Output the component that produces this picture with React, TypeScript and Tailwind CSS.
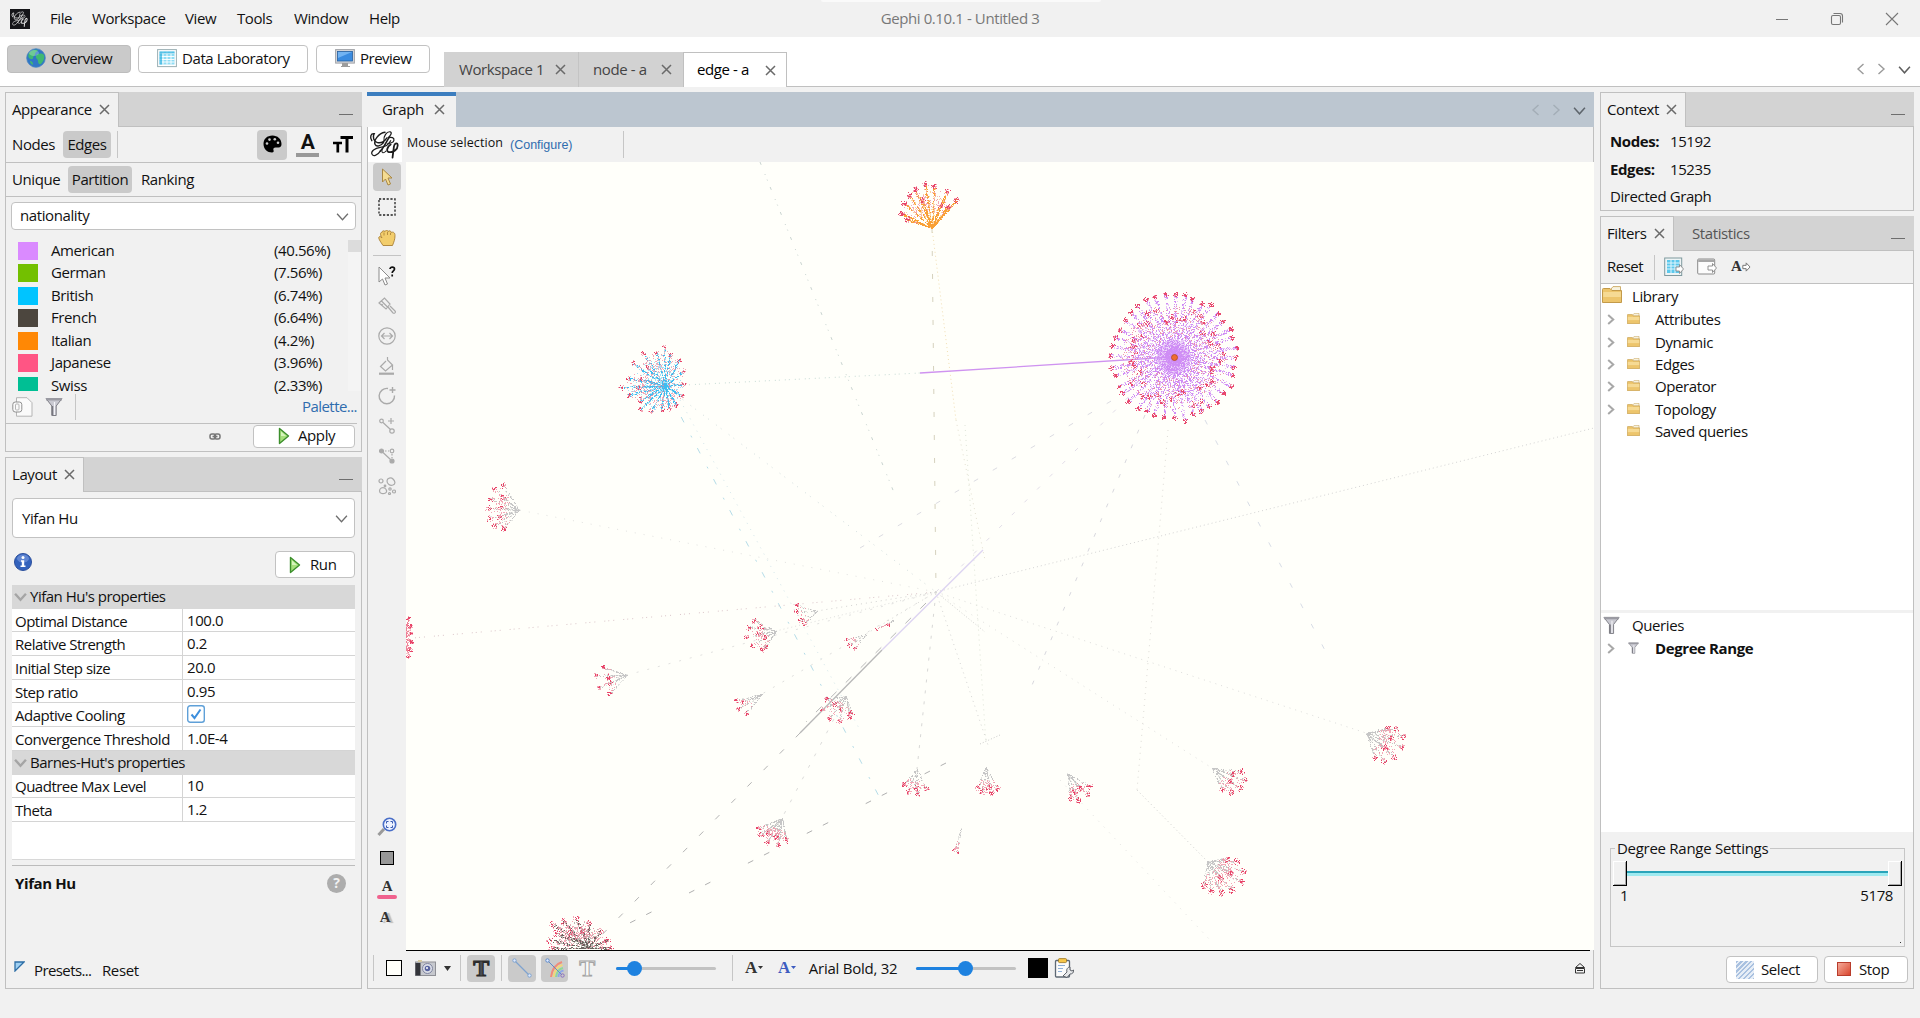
import React from "react";

type Pt = [number, number];
type Kids = { children?: React.ReactNode };

/* ---------- small shared pieces ---------- */

const Close = ({ className = "" }: { className?: string }) => (
  <svg className={"shrink-0 " + className} width="11" height="11" viewBox="0 0 11 11" fill="none" stroke="#6a6a6a" strokeWidth="1.5">
    <path d="M1 1l9 9M10 1l-9 9" />
  </svg>
);

const Chevron = ({ dir, color = "#6e6e6e", w = 12, sw = 1.4 }: { dir: "l" | "r" | "d"; color?: string; w?: number; sw?: number }) => (
  <svg className="shrink-0" width={w} height={w} viewBox="0 0 12 12" fill="none" stroke={color} strokeWidth={sw}>
    <path d={dir === "l" ? "M8.5 1L3 6l5.5 5" : dir === "r" ? "M3.5 1L9 6l-5.5 5" : "M1 3.5L6 9l5-5.5"} />
  </svg>
);

const Minimize = ({ className = "" }: { className?: string }) => <div className={"h-px w-[14px] bg-[#6e6e6e] " + className} />;
const VSep = ({ className = "" }: { className?: string }) => <div className={"w-px shrink-0 bg-[#c6c6c6] " + className} />;

const GephiMark = ({ color }: { color: string }) => (
  <svg width="100%" height="100%" viewBox="0 0 34 34" fill="none" stroke={color} strokeLinecap="round">
    <path strokeWidth="1.500" d="M3 13C.5 9 2 5 5.500 5.500 3.500 9 5 14 9 15c5 1 8-2 10-5M17 4C10 5 4.500 13 6.500 17c1.500 3 6 1.500 9-2" />
    <path strokeWidth="1.300" d="M16 13c-1-5 3-10 6.500-9.500C25 4 23 8 20 10c4-1.500 7 0 6.500 2.500S22 16 20 16" />
    <path strokeWidth="1.700" d="M21 10c-3 5-5 10-9 14" />
    <path strokeWidth="1.300" d="M12 24c-3 5-8 6-9 3s3-6 9-7 8-2 11-7" />
    <path strokeWidth="1.100" d="M14 22c-1 4 1 5 4 2" />
    <path strokeWidth="1.900" d="M23 17c-3 2-5.500 7-2 8 5 1 9.500-3 9.500-7 0-3.500-3.500-2.500-4 1l-1.500 12" />
  </svg>
);

const Play = () => (
  <svg width="12" height="18" viewBox="0 0 12 18">
    <path d="M1.500 1.500v15L10.500 9z" fill="#a6e07c" stroke="#3c8f2c" strokeWidth="1.400" strokeLinejoin="round" />
    <path d="M3 4.500V9h5z" fill="#d6f5bd" />
  </svg>
);

const Funnel = ({ s = 18 }: { s?: number }) => (
  <svg width={s} height={(s * 20) / 18} viewBox="0 0 18 20">
    <path d="M1 1.500h16L11.200 9v9.500h-4.400V9z" fill="#c9c9d1" stroke="#7d7d85" strokeWidth="1" />
    <path d="M1 1h16v2.500H1z" fill="#9a9aa2" />
    <path d="M7.500 9v9" stroke="#77777f" strokeWidth="1.500" />
    <path d="M9.500 5v13" stroke="#f4f4f8" strokeWidth="1.200" />
  </svg>
);

const Folder = ({ w = 12, h = 11 }: { w?: number; h?: number }) => (
  <svg width={w} height={h} viewBox="0 0 20 17" preserveAspectRatio="none">
    <path d="M9 3l2-2.400h7.500V5H9z" fill="#f7f2df" stroke="#c39c4c" strokeWidth=".8" />
    <path d="M.5 3.500c0-1 .5-1 1-1h6.500l2 2h9.500v12H.5z" fill="#edc56c" stroke="#c39a4a" strokeWidth="1" />
    <path d="M1.200 6h17.600v5H1.200z" fill="#f6da94" />
  </svg>
);

function PanelTab({ title, width, children }: { title: string; width: string } & Kids) {
  return (
    <div className="flex h-[35px] shrink-0 bg-[#d3d3d3]">
      <div className={"flex items-center border-t border-l border-r border-[#c0c0c0] bg-[#f1f1f1] pl-[6px] " + width}>
        <span>{title}</span>
        <Close className="mr-[8px] mb-[2px] ml-auto" />
      </div>
      <div className="flex flex-1 border-b border-[#c0c0c0]">
        {children}
        <Minimize className="mt-[22px] mr-[9px] ml-auto" />
      </div>
    </div>
  );
}

const Button = ({ className = "", children }: { className?: string } & Kids) => (
  <div className={"flex shrink-0 items-center rounded-[4px] border border-[#c2c2c2] bg-white " + className}>{children}</div>
);

/* ---------- top bars ---------- */

function MenuBar() {
  return (
    <div className="relative flex h-[37px] items-center bg-[#f1f1f1] pl-[10px]">
      <div className="h-[20px] w-[20px] bg-[#151518] p-px">
        <GephiMark color="#dcdcdc" />
      </div>
      <div className="ml-[20px] flex h-full items-center">
        <span className="w-[42px]">File</span>
        <span className="w-[93px]">Workspace</span>
        <span className="w-[52px]">View</span>
        <span className="w-[57px]">Tools</span>
        <span className="w-[75px]">Window</span>
        <span>Help</span>
      </div>
      <div className="absolute top-0 left-[821px] h-[2px] w-[280px] rounded-b bg-[#fafafa]" />
      <div className="absolute inset-x-0 flex justify-center text-[#787878]">
        <span>Gephi 0.10.1 - Untitled 3</span>
      </div>
      <svg className="mr-[20px] mb-[2px] ml-auto" width="126" height="16" viewBox="0 0 126 16" fill="none" stroke="#777" strokeWidth="1.100">
        <path d="M2 9.500h12M112 3l12 12M124 3l-12 12" />
        <rect x="57.500" y="5.500" width="9" height="9" rx="1.500" />
        <path d="M59.500 3.500h6.500a2.500 2.500 0 0 1 2.500 2.500v6.500" />
      </svg>
    </div>
  );
}

function Toolbar() {
  return (
    <div className="flex h-[50px] border-b border-[#c0c0c0] bg-white pl-[7px]">
      <div className="mt-[8px] flex h-[28px] w-[124px] items-center rounded-[4px] border border-[#bdbdbd] bg-[#cacaca] pl-[18px]">
        <svg className="mb-[2px]" width="20" height="20" viewBox="0 0 20 20">
          <circle cx="10" cy="10" r="9.300" fill="#2f76c6" stroke="#4a86c0" strokeWidth=".8" />
          <path d="M3 5c2-3 6-4 9-3-1 2-3 2-3 4s-2 2-2 4-3 1-4 0-1-3 0-5zM10 8c2-3 6-3 8-1 1 4-1 7-3 9-2 1-3-1-3-3s-3-3-2-5zM4 13c2 0 3 1 3 4-2-1-3-2-3-4z" fill="#3fb872" />
          <ellipse cx="8" cy="5" rx="5" ry="3" fill="#fff" opacity=".25" />
        </svg>
        <span className="ml-[5px] tracking-[-0.5px]">Overview</span>
      </div>
      <Button className="mt-[8px] ml-[7px] h-[28px] w-[170px] pl-[18px]">
        <svg className="mb-[2px]" width="20" height="20" viewBox="0 0 20 20">
          <rect x=".6" y="1.600" width="18.800" height="17" fill="#fff" stroke="#9bb0b4" />
          <rect x="2.500" y="3.500" width="15" height="13" fill="#8fdcf4" />
          <path d="M2.500 5.500h15M2.500 8.500h15M2.500 11.500h15M2.500 14h15M6 3.500v13M10 3.500v13M14 3.500v13" stroke="#fff" strokeWidth=".9" />
          <path d="M2.500 3.500h15v2h-15zM2.500 3.500h2.500v13H2.500z" fill="#35b4e0" opacity=".7" />
        </svg>
        <span className="ml-[5px]">Data Laboratory</span>
      </Button>
      <Button className="mt-[8px] ml-[8px] h-[28px] w-[114px] pl-[18px]">
        <svg className="mb-[2px]" width="20" height="20" viewBox="0 0 20 20">
          <rect x=".6" y="1.600" width="18.800" height="13.500" fill="#d7d9dc" stroke="#a2a4a8" />
          <rect x="2.500" y="3.500" width="15" height="9.500" fill="#3a8be0" stroke="#27609f" strokeWidth=".8" />
          <path d="M3 4h14l-14 6z" fill="#72b3f2" />
          <path d="M7 15h6v3H7zM6 18h9v1H6z" fill="#9c9c9c" />
        </svg>
        <span className="ml-[5px] tracking-[-0.5px]">Preview</span>
      </Button>
      <div className="mt-[15px] ml-[14px] flex h-[35px] text-[#444]">
        <div className="flex w-[134px] items-center bg-[#d2d2d2] pl-[15px]">
          <span>Workspace 1</span>
          <Close className="mr-[12px] ml-auto" />
        </div>
        <div className="flex w-[105px] items-center border-l border-[#c4c4c4] bg-[#d2d2d2] pl-[14px]">
          <span>node - a</span>
          <Close className="mr-[11px] ml-auto" />
        </div>
        <div className="flex w-[104px] items-center border border-b-0 border-[#c0c0c0] bg-white pl-[13px] text-black">
          <span>edge - a</span>
          <Close className="mr-[10px] ml-auto" />
        </div>
      </div>
      <div className="mt-[26px] mr-[9px] ml-auto flex gap-[8px]">
        <Chevron dir="l" color="#9a9a9a" />
        <Chevron dir="r" color="#9a9a9a" />
        <div className="ml-[3px]"><Chevron dir="d" color="#5e5e5e" w={13} /></div>
      </div>
    </div>
  );
}

/* ---------- left column ---------- */

const nationalities: [string, string, string][] = [
  ["American", "(40.56%)", "#da8aff"],
  ["German", "(7.56%)", "#73c000"],
  ["British", "(6.74%)", "#00c4ff"],
  ["French", "(6.64%)", "#4c463e"],
  ["Italian", "(4.2%)", "#ff8805"],
  ["Japanese", "(3.96%)", "#ff5584"],
  ["Swiss", "(2.33%)", "#00bf94"],
];

function Appearance() {
  return (
    <div className="flex h-[360px] flex-col border-b border-[#c0c0c0]">
      <PanelTab title="Appearance" width="w-[114px]" />
      <div className="flex flex-1 flex-col border-x border-[#c0c0c0]">
        <div className="flex h-[36px] items-center border-b border-[#c0c0c0] pl-[6px]">
          <span className="w-[51px]">Nodes</span>
          <div className="flex h-[27px] w-[48px] items-center justify-center rounded-[4px] bg-[#cacaca]"><span>Edges</span></div>
          <VSep className="ml-[6px] h-[27px]" />
          <div className="ml-auto flex h-[30px] w-[30px] items-center justify-center rounded-[4px] bg-[#cacaca]">
            <svg className="mb-[2px]" width="19" height="18" viewBox="0 0 19 18">
              <path d="M9.500.5C4 .5.5 4 .5 9s4 8.500 8.500 8.500c1.700 0 2-1 1.500-2.200-.6-1.600.3-2.800 2-2.800h3c2 0 3-1.500 3-3.500 0-5-4-8.500-9-8.500z" fill="#000" />
              <circle cx="4" cy="8.500" r="1.300" fill="#ccc" /><circle cx="6.500" cy="4.600" r="1.300" fill="#ccc" />
              <circle cx="11.800" cy="4.300" r="1.300" fill="#ccc" /><circle cx="15" cy="7.800" r="1.300" fill="#ccc" />
            </svg>
          </div>
          <div className="mb-[2px] ml-[9px] flex h-[26px] w-[23px] flex-col items-center">
            <span className="mb-0! h-[22px] font-['Roboto'] text-[21px] leading-[22px] font-bold">A</span>
            <div className="h-[4px] w-full bg-[#999]" />
          </div>
          <svg className="mr-[8px] mb-[1px] ml-[14px]" width="20" height="18" viewBox="0 0 20 18" fill="none" stroke="#000">
            <path d="M7.500 2.500H20M14 2v15.500" strokeWidth="3" />
            <path d="M0 8h9M4.800 8v9.500" strokeWidth="2.700" />
          </svg>
        </div>
        <div className="flex h-[34px] items-center border-b border-[#c0c0c0] pl-[6px]">
          <span className="w-[56px]">Unique</span>
          <div className="mr-[9px] flex h-[27px] w-[64px] items-center justify-center rounded-[4px] bg-[#cacaca]"><span>Partition</span></div>
          <span>Ranking</span>
        </div>
        <Button className="mx-[5px] mt-[5px] h-[28px] justify-between pr-[6px] pl-[8px]">
          <span>nationality</span>
          <Chevron dir="d" w={13} sw={1.2} />
        </Button>
        <div className="mt-[9px] flex h-[152px]">
          <div className="flex-1 pl-[12px]">
            {nationalities.map(([n, p, c], i) => (
              <div key={n} className="flex h-[22.500px] items-center">
                <div className={"w-[20px] " + (i === 6 ? "mt-px mb-[4px] h-[14px]" : "mt-px h-[18px]")} style={{ background: c }} />
                <span className="mb-[1px]! ml-[13px] w-[223px]">{n}</span>
                <span className="mb-[1px]!">{p}</span>
              </div>
            ))}
          </div>
          <div className="mt-px w-[13px] bg-[#f4f4f4]"><div className="h-[12px] bg-[#dcdcdc]" /></div>
        </div>
        <div className="mr-[4px] flex h-[33px] items-center border-b border-[#c0c0c0] pl-[6px]">
          <svg width="21" height="20" viewBox="0 0 21 20" fill="#fafafa" stroke="#b5b5b5">
            <path d="M4.500.7h10.500l5 5v13.500H4.500z" />
            <rect x=".8" y="5" width="9" height="10" rx="2.500" stroke="#8f8f8f" />
            <rect x="3.500" y="7" width="3.500" height="6" rx="1" />
          </svg>
          <div className="ml-[12px]"><Funnel s={18} /></div>
          <VSep className="ml-[12px] h-[26px]" />
          <span className="ml-auto tracking-[-0.55px] text-[#2f6cae]">Palette...</span>
        </div>
        <div className="flex flex-1 items-start">
          <svg className="mt-[9px] ml-[203px]" width="12" height="7" viewBox="0 0 12 7" fill="none" stroke="#777" strokeWidth="1.500">
            <rect x="1" y="1" width="5.500" height="5" rx="2" /><rect x="5.500" y="1" width="5.500" height="5" rx="2" /><path d="M3.500 3.500h5" />
          </svg>
          <Button className="mt-px ml-[32px] h-[23px] w-[102px] pl-[24px]">
            <div className="mb-[2px]"><Play /></div>
            <span className="mb-[3px]! ml-[8px]">Apply</span>
          </Button>
        </div>
      </div>
    </div>
  );
}

const PropHead = ({ children }: Kids) => (
  <div className="flex h-[23.700px] items-center bg-[#d8d8d8] pl-[2px]">
    <Chevron dir="d" color="#a5a5a5" w={13} sw={2.2} />
    <span className="mb-[1px]! ml-[3px] tracking-[-0.5px]">{children}</span>
  </div>
);

const Prop = ({ k, children }: { k: string } & Kids) => (
  <div className="flex h-[23.700px] items-stretch border-b border-[#d4d4d4]">
    <div className="flex w-[171px] items-center border-r border-[#d4d4d4] pt-px pl-[3px] tracking-[-0.5px] whitespace-nowrap">{k}</div>
    <div className="flex items-center pb-[1px] pl-[4px]">{children}</div>
  </div>
);

function LayoutPanel() {
  return (
    <div className="mt-[5px] flex h-[532px] flex-col border-b border-[#c0c0c0]">
      <PanelTab title="Layout" width="w-[79px]" />
      <div className="flex flex-1 flex-col border-x border-[#c0c0c0] px-[6px]">
        <Button className="mt-[6px] h-[40px] justify-between pr-[6px] pl-[9px]">
          <span className="mb-[1px]!">Yifan Hu</span>
          <Chevron dir="d" w={13} sw={1.2} />
        </Button>
        <div className="mt-[13px] flex justify-between">
          <svg className="mt-[2px] ml-[2px]" width="18" height="18" viewBox="0 0 18 18">
            <circle cx="9" cy="9" r="8.500" fill="#3463bd" stroke="#2b4f9c" />
            <ellipse cx="9" cy="5.500" rx="6" ry="4" fill="#7f9fe0" opacity=".6" />
            <path d="M7 7.200h3.200v5.300h1.300v1.600H6.500v-1.600h1.300V8.800H7z" fill="#fff" /><circle cx="9" cy="4.500" r="1.500" fill="#fff" />
          </svg>
          <Button className="h-[27px] w-[80px] pl-[13px]">
            <Play />
            <span className="ml-[9px]">Run</span>
          </Button>
        </div>
        <div className="mt-[7px] h-[275px] border-b border-[#d8d8d8] bg-white">
          <PropHead>Yifan Hu's properties</PropHead>
          <Prop k="Optimal Distance">100.0</Prop>
          <Prop k="Relative Strength">0.2</Prop>
          <Prop k="Initial Step size">20.0</Prop>
          <Prop k="Step ratio">0.95</Prop>
          <Prop k="Adaptive Cooling">
            <svg width="18" height="18" viewBox="0 0 18 18" fill="none">
              <rect x=".7" y=".7" width="16.600" height="16.600" rx="2.500" fill="#fff" stroke="#5fa0d8" strokeWidth="1.400" />
              <path d="M4.500 9.500l3 3.500 6-8.500" stroke="#3d8fdd" strokeWidth="2" />
            </svg>
          </Prop>
          <Prop k="Convergence Threshold">1.0E-4</Prop>
          <PropHead>Barnes-Hut's properties</PropHead>
          <Prop k="Quadtree Max Level">10</Prop>
          <Prop k="Theta">1.2</Prop>
        </div>
        <div className="mt-[5px] h-px bg-[#bcbcbc]" />
        <div className="mt-[7px] flex items-center justify-between pr-[9px] pl-[3px]">
          <b className="font-bold">Yifan Hu</b>
          <div className="flex h-[19px] w-[19px] items-center justify-center rounded-full bg-[#adadad] text-[14px] font-bold text-[#f2f2f2]">?</div>
        </div>
        <div className="mt-auto mb-[6px] flex items-center pl-[2px]">
          <svg className="mb-[10px]" width="11" height="11" viewBox="0 0 11 11"><path d="M1 1h9L1 10z" fill="#9fd0f3" stroke="#2d6ea6" strokeWidth="1.300" /></svg>
          <span className="ml-[9px] w-[68px] tracking-[-0.6px]">Presets...</span>
          <span>Reset</span>
        </div>
      </div>
    </div>
  );
}

/* ---------- network drawing ---------- */

function makeRandom(seed: number) {
  let a = seed >>> 0;
  return () => {
    a = (a + 0x6d2b79f5) >>> 0;
    let t = a;
    t = Math.imul(t ^ (t >>> 15), t | 1);
    t ^= t + Math.imul(t ^ (t >>> 7), t | 61);
    return ((t ^ (t >>> 14)) >>> 0) / 4294967296;
  };
}

type Cluster = { hub: Pt; tips: Pt[]; color: string; leaf?: number; spoke?: number; spread?: number; haze?: number; hazeLeaf?: number };

const GREY = "#c6c6c6";

const clusters: Cluster[] = [
  { hub: [932, 228], tips: [[901, 213], [904, 203], [909, 195], [915, 189], [925, 184], [934, 186], [947, 191], [956, 200], [948, 206], [907, 219], [922, 200], [940, 205]], color: "#f9a035", leaf: 30, spoke: 100, spread: 3, haze: 140, hazeLeaf: 140 },
  { hub: [665, 386], tips: [[633, 363], [643, 353], [656, 352], [670, 354], [627, 378], [621, 387], [629, 395], [640, 409], [651, 411], [661, 410], [669, 408], [640, 378], [647, 367], [640, 400], [638, 387], [664, 347], [679, 360], [683, 371], [684, 384], [682, 396], [676, 405]], color: "#3fbcf0", leaf: 13, spoke: 60, spread: 2.7, haze: 620, hazeLeaf: 420 },
  { hub: [519, 510], tips: [[503, 485], [494, 489], [490, 498], [488, 508], [489, 518], [494, 526], [503, 528], [502, 497], [500, 507], [499, 517]], color: GREY, leaf: 18, spoke: 32, spread: 3.1, hazeLeaf: 90 },
  { hub: [404, 638], tips: [[408, 618], [410, 626], [411, 633], [411, 641], [410, 649], [408, 656]], color: "#ee7f96", leaf: 20, spoke: 50, spread: 2.4 },
  { hub: [627, 675], tips: [[603, 667], [596, 675], [599, 687], [609, 694], [608, 677], [610, 683]], color: GREY, leaf: 18, spoke: 34, spread: 2.7, hazeLeaf: 26 },
  { hub: [776, 631], tips: [[754, 620], [748, 627], [746, 637], [752, 645], [761, 650], [765, 647], [758, 634], [760, 627], [764, 637]], color: GREY, leaf: 17, spoke: 28, spread: 2.8, hazeLeaf: 60 },
  { hub: [817, 611], tips: [[797, 605], [796, 611], [800, 620], [804, 623]], color: GREY, leaf: 14, spoke: 18, spread: 2.4 },
  { hub: [762, 694], tips: [[736, 700], [738, 709], [746, 713], [742, 702]], color: GREY, leaf: 17, spoke: 34, spread: 2.4 },
  { hub: [846, 696], tips: [[826, 699], [823, 709], [829, 718], [839, 721], [849, 717], [834, 704], [840, 709], [851, 713]], color: GREY, leaf: 18, spoke: 30, spread: 2.8, hazeLeaf: 60 },
  { hub: [866, 634], tips: [[846, 639], [849, 645], [854, 649]], color: GREY, leaf: 10, spoke: 12, spread: 2.2 },
  { hub: [893, 620], tips: [[876, 629], [888, 624]], color: GREY, leaf: 8, spoke: 8, spread: 2 },
  { hub: [782, 818], tips: [[758, 828], [760, 835], [767, 842], [778, 845], [786, 840], [768, 833], [776, 836]], color: GREY, leaf: 20, spoke: 46, spread: 3, hazeLeaf: 110 },
  { hub: [917, 769], tips: [[904, 784], [908, 791], [917, 794], [926, 789], [915, 788]], color: GREY, leaf: 20, spoke: 22, spread: 3.2, hazeLeaf: 50 },
  { hub: [986, 767], tips: [[977, 787], [982, 792], [991, 793], [997, 788], [988, 788]], color: GREY, leaf: 20, spoke: 24, spread: 3.1, hazeLeaf: 50 },
  { hub: [1067, 773], tips: [[1070, 798], [1078, 800], [1087, 794], [1089, 786], [1080, 788], [1074, 792]], color: GREY, leaf: 22, spoke: 28, spread: 3.1, hazeLeaf: 60 },
  { hub: [1212, 768], tips: [[1222, 790], [1231, 792], [1240, 788], [1245, 780], [1241, 771], [1230, 781], [1233, 774]], color: GREY, leaf: 22, spoke: 30, spread: 3.1, hazeLeaf: 70 },
  { hub: [1366, 733], tips: [[1375, 757], [1384, 761], [1394, 757], [1402, 747], [1403, 736], [1396, 729], [1387, 728], [1384, 747], [1391, 738]], color: GREY, leaf: 20, spoke: 40, spread: 3.2, hazeLeaf: 120 },
  { hub: [1207, 861], tips: [[1204, 885], [1211, 891], [1221, 893], [1232, 890], [1241, 882], [1243, 871], [1236, 861], [1226, 859], [1220, 878], [1230, 872]], color: GREY, leaf: 24, spoke: 44, spread: 3.4, hazeLeaf: 190 },
  { hub: [961, 828], tips: [[954, 849], [957, 852]], color: GREY, leaf: 9, spoke: 14, spread: 2 },
  { hub: [588, 948], tips: [[552, 924], [556, 933], [549, 940], [551, 948], [563, 921], [576, 918], [589, 922], [600, 931], [607, 940], [610, 948], [570, 932], [582, 930]], color: "#6b6460", leaf: 17, spoke: 62, spread: 3.6, haze: 300, hazeLeaf: 380 },
];

const pixel = (x: number, y: number) => `M${Math.round(x)} ${Math.round(y)}h1v1h-1z`;

function ClusterDots({ c, seed }: { c: Cluster; seed: number }) {
  const rnd = makeRandom(seed * 7919 + 13);
  const spread = c.spread ?? 2.5;
  let lines = "";
  let soft = "";
  let leaves = "";
  let softLeaves = "";
  for (const [tx, ty] of c.tips) {
    for (let i = 0; i < (c.spoke ?? 20); i++) {
      const t = rnd();
      const j = spread * 0.9 * t;
      const p = pixel(c.hub[0] + (tx - c.hub[0]) * t + (rnd() - 0.5) * j, c.hub[1] + (ty - c.hub[1]) * t + (rnd() - 0.5) * j);
      if (rnd() < 0.55) lines += p;
      else soft += p;
    }
    for (let i = 0; i < (c.leaf ?? 10); i++) {
      const a = rnd() * 6.283;
      const r = spread * Math.pow(rnd(), 0.7);
      const p = pixel(tx + r * Math.cos(a), ty + r * Math.sin(a));
      if (rnd() < 0.4) leaves += p;
      else softLeaves += p;
    }
  }
  const inner = (min: number) => {
    const a = c.tips[Math.floor(rnd() * c.tips.length)];
    const b = c.tips[Math.floor(rnd() * c.tips.length)];
    const m = rnd();
    const t = min + (1 - min) * rnd();
    return pixel(c.hub[0] + (a[0] * m + b[0] * (1 - m) - c.hub[0]) * t, c.hub[1] + (a[1] * m + b[1] * (1 - m) - c.hub[1]) * t);
  };
  for (let i = 0; i < (c.haze ?? 14); i++) soft += inner(0);
  for (let i = 0; i < (c.hazeLeaf ?? 16); i++) softLeaves += inner(0.6);
  return (
    <g>
      <path d={soft} fill={c.color} opacity=".45" />
      <path d={lines} fill={c.color} />
      <path d={softLeaves} fill="#f08ba0" opacity=".75" />
      <path d={leaves} fill="#e84468" />
    </g>
  );
}

function Dandelion({ cx, cy }: { cx: number; cy: number }) {
  const rnd = makeRandom(4242);
  let solid = "";
  let soft = "";
  let red = "";
  let pink = "";
  const blob = (x: number, y: number, n: number, r: number, strong = 0.7) => {
    for (let i = 0; i < n; i++) {
      const a = rnd() * 6.283;
      const q = r * Math.pow(rnd(), 0.8);
      const p = pixel(x + q * Math.cos(a), y + q * Math.sin(a));
      if (rnd() < strong) red += p;
      else pink += p;
    }
  };
  const spoke = (a: number, len: number, n: number) => {
    for (let k = 0; k < n; k++) {
      const t = rnd();
      const off = (rnd() - 0.5) * (1.4 + t * 2.4);
      const p = pixel(cx + len * t * Math.cos(a) - off * Math.sin(a), cy + len * t * Math.sin(a) + off * Math.cos(a));
      if (rnd() < 0.5) solid += p;
      else soft += p;
    }
  };
  const spokes = 40;
  for (let i = 0; i < spokes; i++) {
    const a = (i / spokes) * 6.283 + (rnd() - 0.5) * 0.05;
    const len = 60 + rnd() * 4.5;
    spoke(a, len, 125);
    blob(cx + len * Math.cos(a), cy + len * Math.sin(a), 20, 2.8);
    const b = a + 0.079;
    const l2 = 36 + rnd() * 16;
    spoke(b, l2, 30);
    blob(cx + l2 * Math.cos(b), cy + l2 * Math.sin(b), 18, 3.2, 0.5);
  }
  for (let i = 0; i < 1150; i++) {
    const r = 52 * Math.pow(rnd(), 0.7);
    const a = rnd() * 6.283;
    const p = pixel(cx + r * Math.cos(a), cy + r * Math.sin(a));
    if (r > 20 && rnd() < 0.65) pink += p;
    else soft += p;
  }
  return (
    <g>
      <circle cx={cx} cy={cy} r="9" fill="#cf8cf5" opacity=".7" />
      <circle cx={cx} cy={cy} r="17" fill="#cf8cf5" opacity=".35" />
      <path d={soft} fill="#d08cf6" opacity=".5" />
      <path d={solid} fill="#cf8df5" />
      <path d={pink} fill="#ee7f9c" opacity=".8" />
      <path d={red} fill="#e8486d" />
      <circle cx={cx + 0.5} cy={cy + 0.5} r="3" fill="#ef6c2e" stroke="#b04a20" strokeWidth=".8" shapeRendering="auto" />
    </g>
  );
}

/* x1, y1, x2, y2, colour, dash pattern */
const edges: [number, number, number, number, string, string][] = [
  [760, 162, 895, 495, "#c9d4d0", "3 10 1 5 1 7"],
  [932, 228, 956, 420, "#f2dfb4", "1 3"],
  [956, 420, 985, 560, "#e4e0d0", "1 4"],
  [932, 228, 936, 590, "#d6d2be", "5 18"],
  [665, 386, 920, 373, "#c8dcd6", "1 3 1 5"],
  [665, 386, 936, 592, "#d3dede", "1 5 1 9"],
  [665, 386, 884, 806, "#b4dce8", "6 15 2 12"],
  [680, 400, 860, 730, "#d4e6ea", "1 6"],
  [936, 592, 413, 638, "#dcc6ca", "1 4 1 3 1 9"],
  [936, 592, 519, 510, "#e2e2e0", "1 8"],
  [936, 592, 627, 675, "#e2e2e0", "2 9"],
  [936, 592, 762, 694, "#dfdfdd", "2 9"],
  [936, 592, 776, 631, "#dfdfdd", "1 3"],
  [936, 592, 817, 611, "#d4d4d2", "1 4"],
  [936, 592, 866, 634, "#d8d8d6", "1 4"],
  [936, 592, 1594, 428, "#d4d4d4", "1 3"],
  [936, 592, 1150, 375, "#e2dde8", "4 14"],
  [936, 592, 985, 632, "#d4d4d2", "1 2"],
  [936, 592, 988, 745, "#d6d6d4", "1 4"],
  [936, 592, 1366, 733, "#dededc", "1 5"],
  [936, 592, 1212, 768, "#e0e0de", "1 6"],
  [1060, 780, 1210, 940, "#e2e2e0", "1 7"],
  [936, 592, 917, 769, "#d8d8d6", "3 8"],
  [1168, 430, 1137, 790, "#dedcd6", "1 5"],
  [1137, 790, 1207, 861, "#cfcfcd", "1 3"],
  [1205, 420, 1330, 660, "#d8dde6", "5 18"],
  [1145, 415, 1030, 690, "#d8d8de", "4 12"],
  [1130, 390, 860, 548, "#dcdce2", "5 17"],
  [965, 425, 986, 744, "#dfe6d8", "1 4"],
  [980, 744, 1000, 735, "#cccccb", "1 2"],
  [846, 696, 782, 818, "#dcdcda", "3 10"],
  [800, 733, 588, 949, "#b4b4b4", "6 17"],
  [926, 603, 806, 722, "#b9b9b9", "8 13"],
  [946, 763, 600, 938, "#b0b0b0", "6 12 6 42"],
  [882, 650, 800, 733, "#b8b8b8", ""],
  [983, 550, 882, 650, "#ddd4f2", ""],
  [920, 373, 1172, 357, "#cf93f0", ""],
];

function Network() {
  return (
    <svg className="block h-[788px] w-full bg-[#fffffa]" viewBox="406 162 1188 788" preserveAspectRatio="xMinYMin slice" shapeRendering="crispEdges">
      {edges.map(([x1, y1, x2, y2, c, dash], i) => (
        <line key={i} x1={x1} y1={y1} x2={x2} y2={y2} stroke={c} strokeWidth={dash ? 1 : 1.3} strokeDasharray={dash || undefined} shapeRendering="auto" />
      ))}
      {clusters.map((c, i) => (
        <ClusterDots key={i} c={c} seed={i + 1} />
      ))}
      <Dandelion cx={1174} cy={357} />
    </svg>
  );
}

/* ---------- centre ---------- */

const Tool = ({ children, h = "h-[30px]" }: Kids & { h?: string }) => <div className={"flex w-[28px] shrink-0 items-center justify-center " + h}>{children}</div>;
const grey = { fill: "none", stroke: "#aaa", strokeWidth: 1.2 };

function ToolStrip() {
  return (
    <div className="flex w-[38px] shrink-0 flex-col items-start pt-px pl-[5px]">
      <div className="mb-px flex h-[28px] w-[28px] items-center justify-center rounded-[4px] bg-[#cacaca]">
        <svg width="12" height="18" viewBox="0 0 12 18"><path d="M1.500 1v13l3-3 2.500 6 2.500-1-2.500-6h4z" fill="#f5dc92" stroke="#a98742" /></svg>
      </div>
      <Tool><svg width="18" height="18" viewBox="0 0 18 18"><rect x="1" y="1" width="16" height="16" fill="none" stroke="#222" strokeWidth="1.300" strokeDasharray="2.200 1.600" /></svg></Tool>
      <Tool h="h-[32px]">
        <svg className="mb-px" width="18" height="16" viewBox="0 0 18 16"><path d="M5 15.500C2 11 0 8 1 7s2 0 3 1C2 5 2 2 4 2.500c0-2 2-2 3-1 1-2 3-1 3 0 1-1 3-1 3 1 2-1 4 0 4 3 0 4-1 6-2.500 10z" fill="#f2cd6c" stroke="#a97f34" strokeWidth=".9" /><path d="M6 2.500v3M9.500 2v3M12.500 3v2" stroke="#a97f34" strokeWidth=".8" /></svg>
      </Tool>
      <div className="mt-px mb-[5px] h-px w-[28px] bg-[#c4c4c4]" />
      <Tool>
        <svg width="18" height="20" viewBox="0 0 18 20"><path d="M1 1v15l3.500-3 2.500 6 2.500-1-2.500-6h5z" fill="#fff" stroke="#8b8b8b" /><path d="M12 3c0-2.500 4.500-2.500 4.500 0 0 2-2.300 1.800-2.300 4M14.200 8.500v2" fill="none" stroke="#111" strokeWidth="1.700" /></svg>
      </Tool>
      <Tool><svg width="18" height="18" viewBox="0 0 18 18" {...grey}><path d="M1 6l5.500-5L12 7l-4 5zM3.500 4l6 6M5 8.500l-1.500-1.500M10 10l5 6c2 1 3-1 2-2l-5-5" /></svg></Tool>
      <Tool><svg width="18" height="18" viewBox="0 0 18 18" {...grey}><circle cx="9" cy="9" r="8.200" /><path d="M3.500 9h11M6.500 6l-3 3 3 3M11.500 6l3 3-3 3" /></svg></Tool>
      <Tool><svg width="18" height="18" viewBox="0 0 18 18" {...grey}><path d="M8 4l-5.500 5.500 5 4.500 7-6-5-5V0M14.500 8v5" /><path d="M1 16.700h15" strokeWidth="2.200" /></svg></Tool>
      <Tool><svg width="18" height="18" viewBox="0 0 18 18" {...grey}><path d="M10 1.500a7.700 7.700 0 1 0 6.500 7M14.500 0v6M11.500 3h6" strokeWidth="1.400" /></svg></Tool>
      <Tool><svg width="16" height="16" viewBox="0 0 16 16" {...grey}><circle cx="2.500" cy="3" r="1.800" /><circle cx="13" cy="13" r="2.200" /><path d="M4 4.500l7.500 7M12 0v6M9 3h6" /></svg></Tool>
      <Tool><svg width="16" height="16" viewBox="0 0 16 16" {...grey}><circle cx="2.500" cy="3" r="2" fill="#aaa" /><circle cx="13" cy="13" r="2" fill="#aaa" /><circle cx="13" cy="3" r="1.800" /><path d="M4 4.500l7.500 7" /><path d="M6 3h4M13 6v4" strokeDasharray="1.500 1.500" /></svg></Tool>
      <Tool><svg width="18" height="18" viewBox="0 0 18 18" {...grey}><circle cx="3" cy="4" r="2" /><path d="M9 4c0-3 4-4 6-2s3 5 0 6-6-1-6-4zM1.500 14c0-3 3-4 5-3s3 4 1 5-6 1-6-2z" /><circle cx="7" cy="9" r=".8" /><circle cx="12" cy="12" r="1.200" /><circle cx="16" cy="14.500" r="1.500" /><circle cx="11.500" cy="16.500" r="1" /></svg></Tool>
      <div className="mt-auto mb-[18px]">
        <Tool><svg width="20" height="20" viewBox="0 0 20 20" fill="none"><path d="M7 12l-5.500 6" stroke="#9a9a9a" strokeWidth="3" /><circle cx="12.500" cy="7.500" r="6.200" fill="#edf2ff" stroke="#4a6fc8" strokeWidth="1.600" /><path d="M9.500 6.500v-2h2M13.500 4.500h2v2M15.500 8.500v2h-2M11.500 10.500h-2v-2" stroke="#3559b0" /></svg></Tool>
        <Tool h="h-[32px]"><div className="h-[14px] w-[14px] border border-black bg-[#979797]" /></Tool>
        <Tool h="h-[30px]">
          <div className="flex flex-col items-center">
            <span className="mb-0! font-['Liberation_Serif'] text-[15px] leading-[13px] font-bold text-[#333]">A</span>
            <div className="mt-[2px] h-[4px] w-[20px] rounded-sm bg-[#f0628e]" />
          </div>
        </Tool>
        <Tool h="h-[28px]">
          <span className="mr-[4px] font-['Liberation_Serif'] text-[15px] font-bold text-[#333] [text-shadow:3px_1px_1px_#bbb]">A</span>
        </Tool>
      </div>
    </div>
  );
}

const Slider = ({ knob, fill }: { knob: string; fill: string }) => (
  <div className="relative flex h-[16px] w-[100px] items-center">
    <div className="h-[3px] w-full rounded bg-[#c2c2c2]" />
    <div className={"absolute left-0 h-[3px] rounded bg-[#1e82e0] " + fill} />
    <div className={"absolute h-[15px] w-[15px] rounded-full bg-[#1e82e0] " + knob} />
  </div>
);

function BottomBar() {
  return (
    <div className="flex h-[38px] shrink-0 items-center pb-[2px] pl-[5px]">
      <VSep className="h-[26px]" />
      <div className="ml-[12px] h-[16px] w-[16px] border border-black bg-[#fffffa]" />
      <svg className="ml-[13px]" width="21" height="16" viewBox="0 0 21 16">
        <rect x=".5" y="2" width="20" height="13.500" fill="#c6c8ce" stroke="#8f9096" />
        <path d="M.5 3h5v12.500h-5z" fill="#33343a" /><path d="M3 0h4v2H3z" fill="#d5c9a0" />
        <circle cx="12.500" cy="8.500" r="5" fill="#dcdfe8" stroke="#8085a0" /><circle cx="12.500" cy="8.500" r="2.800" fill="#5864a0" /><circle cx="12" cy="8" r="1" fill="#fff" />
      </svg>
      <svg className="ml-[8px]" width="7" height="5" viewBox="0 0 7 5"><path d="M0 0h7L3.500 5z" fill="#333" /></svg>
      <VSep className="ml-[9px] h-[26px]" />
      <div className="ml-[6px] flex h-[27px] w-[28px] items-center justify-center rounded-[4px] bg-[#cacaca]">
        <svg className="overflow-visible" width="20" height="19" viewBox="0 0 20 19"><text x="10" y="17" textAnchor="middle" fontFamily="Liberation Serif" fontWeight="bold" fontSize="24" fill="#4a4e55" stroke="#2a2a2a" strokeWidth="1.200">T</text></svg>
      </div>
      <VSep className="ml-[6px] h-[26px]" />
      <div className="ml-[6px] flex h-[27px] w-[28px] items-center justify-center rounded-[4px] bg-[#cacaca]">
        <svg width="20" height="20" viewBox="0 0 20 20" fill="none" stroke="#7fa3cf"><path d="M3 3l14 14" strokeWidth="1.200" /><circle cx="2.500" cy="2.500" r="1.700" fill="#dfeaff" /><circle cx="17.500" cy="17.500" r="1.700" fill="#dfeaff" /></svg>
      </div>
      <div className="ml-[5px] flex h-[27px] w-[27px] items-center justify-center rounded-[4px] bg-[#cacaca]">
        <svg width="20" height="20" viewBox="0 0 20 20" fill="none">
          <path d="M6 19C7 11 11 6 17 4" stroke="#f08b7a" strokeWidth="2" /><path d="M8.500 19C9.500 13 12 8 17.500 7" stroke="#f2d77a" strokeWidth="2" /><path d="M11 19c.5-4 3-8 7-9" stroke="#8fd89a" strokeWidth="2" /><path d="M13.500 19c0-3 2-6 5-6.500" stroke="#8ea6ea" strokeWidth="2" />
          <path d="M3 3l14 14" stroke="#5f8ccb" /><circle cx="2.500" cy="2.500" r="1.700" stroke="#5f8ccb" fill="#dfeaff" /><circle cx="17.500" cy="17.500" r="1.700" stroke="#8a6fc0" />
        </svg>
      </div>
      <svg className="ml-[9px] overflow-visible" width="20" height="19" viewBox="0 0 20 19"><text x="10" y="17" textAnchor="middle" fontFamily="Liberation Serif" fontWeight="bold" fontSize="24" fill="#fafafa" stroke="#a2a2a2" strokeWidth="1">T</text></svg>
      <div className="ml-[19px]"><Slider knob="left-[11px]" fill="w-[18px]" /></div>
      <VSep className="ml-[16px] h-[26px]" />
      <span className="mb-0! ml-[12px] font-['Liberation_Serif'] text-[17px] font-bold text-[#333]">A</span>
      <svg className="mt-[-2px] ml-[1px]" width="5" height="3" viewBox="0 0 5 3"><path d="M0 0h5L2.500 3z" fill="#333" /></svg>
      <span className="mb-0! ml-[15px] font-['Liberation_Serif'] text-[17px] font-bold text-[#3d5cc0]">A</span>
      <svg className="mt-[-2px] ml-[1px]" width="5" height="3" viewBox="0 0 5 3"><path d="M0 0h5L2.500 3z" fill="#3d5cc0" /></svg>
      <span className="mb-0! ml-[13px] w-[107px] tracking-[-0.25px]">Arial Bold, 32</span>
      <Slider knob="left-[42px]" fill="w-[48px]" />
      <div className="ml-[12px] h-[20px] w-[20px] bg-black" />
      <svg className="ml-[6px]" width="20" height="20" viewBox="0 0 20 20">
        <rect x="1.500" y="2.500" width="14" height="16.500" rx="1" fill="#fbfbfb" stroke="#5d6874" strokeWidth="1.300" />
        <rect x="4.500" y=".6" width="8" height="4" rx="1" fill="#f6c64a" stroke="#9a7420" strokeWidth=".8" />
        <path d="M4 7.500h7M4 10.500h5M4 13.500h4" stroke="#8fb0d8" />
        <path d="M9 18l4-4c-1-3 1-5 3-5v3l2 1 1.500-1c.5 3-1.500 4-3.500 4l-3 3.500z" fill="#e6e8ea" stroke="#50565e" strokeWidth=".9" />
      </svg>
      <svg className="mr-[7px] ml-auto" width="12" height="12" viewBox="0 0 12 12" fill="none" stroke="#333"><path d="M1.500 5.500L6 1.500l4.500 4z" /><path d="M1.500 6.500h9v4.500h-9zM3 8.500h6" /></svg>
    </div>
  );
}

function GraphPanel() {
  return (
    <div className="flex h-[897px] w-[1227px] shrink-0 flex-col border-b border-l border-[#c0c0c0]">
      <div className="flex h-[35px] shrink-0 bg-[#bcc6d0]">
        <div className="-ml-px flex w-[89px] items-center border-t-[4px] border-[#3c7ebf] bg-[#f1f1f1] pb-[3px] pl-[15px]">
          <span>Graph</span>
          <Close className="mr-[11px] mb-[2px] ml-auto" />
        </div>
        <div className="mt-[12px] mr-[8px] ml-auto flex gap-[8px]">
          <Chevron dir="l" color="#a3adb6" />
          <Chevron dir="r" color="#a3adb6" />
          <div className="ml-[3px]"><Chevron dir="d" color="#5e656c" w={13} /></div>
        </div>
      </div>
      <div className="flex h-[35px] shrink-0 items-center border-r border-[#c0c0c0]">
        <div className="h-[35px] w-[34px] bg-white p-px"><GephiMark color="#1c1c1c" /></div>
        <span className="mb-[4px]! ml-[5px] w-[103px] font-['Open_Sans'] text-[12.500px] tracking-[0.100px] whitespace-nowrap">Mouse selection</span>
        <span className="mb-0! font-['Liberation_Sans'] text-[12.500px] tracking-normal text-[#2f6cae]">(Configure)</span>
        <VSep className="ml-[50px] h-[27px]" />
      </div>
      <div className="flex h-[788px] shrink-0">
        <ToolStrip />
        <div className="flex-1 overflow-hidden">
          <Network />
        </div>
      </div>
      <div className="mr-[4px] ml-[38px] h-px shrink-0 bg-black" />
      <div className="-mt-px border-r border-[#c0c0c0]"><BottomBar /></div>
    </div>
  );
}

/* ---------- right column ---------- */

const TreeRow = ({ name, leaf = false }: { name: string; leaf?: boolean }) => (
  <div className="flex h-[22.400px] items-center pl-[4px]">
    <div className="mb-px w-[22px]">{!leaf && <Chevron dir="r" color="#a8a8a8" w={11} sw={2.2} />}</div>
    <div className="mb-[3px]"><Folder w={13} h={11} /></div>
    <span className="ml-[15px]">{name}</span>
  </div>
);

function ContextPanel() {
  return (
    <div className="flex h-[119px] flex-col border-b border-[#c0c0c0]">
      <PanelTab title="Context" width="w-[86px]" />
      <div className="flex-1 border-x border-[#c0c0c0] pl-[9px]">
        <div className="flex h-[28px] items-center"><b className="w-[60px]">Nodes:</b>15192</div>
        <div className="flex h-[28px] items-center"><b className="w-[60px]">Edges:</b>15235</div>
        <div className="flex h-[26px] items-center">Directed Graph</div>
      </div>
    </div>
  );
}

const Handle = () => (
  <div className="h-[25px] w-[14px] border-r border-b border-black bg-[#f1f1f1] shadow-[inset_1px_1px_0_#fff,inset_-1px_-1px_0_#a8a8a8]" />
);

function FiltersPanel() {
  return (
    <div className="mt-[5px] flex h-[773px] flex-col border-b border-[#c0c0c0]">
      <PanelTab title="Filters" width="w-[74px]">
        <span className="mt-[7px] ml-[18px] text-[#555]">Statistics</span>
      </PanelTab>
      <div className="flex flex-1 flex-col border-x border-[#c0c0c0]">
        <div className="flex h-[33px] items-center border-b border-[#c0c0c0] pl-[6px]">
          <span className="w-[37px] tracking-[-0.5px]">Reset</span>
          <VSep className="ml-[10px] h-[25px]" />
          <svg className="ml-[9px]" width="20" height="20" viewBox="0 0 20 20">
            <rect x=".7" y="1" width="17" height="17.500" fill="#eef4f5" stroke="#7f999e" /><rect x="3" y="3" width="12.500" height="13" fill="#5cc8ec" />
            <path d="M3 6h12.500M3 9h12.500M3 12h12.500M7 3v13M11 3v13" stroke="#dff6fd" /><path d="M12 10h3.500V7.500l4 4.500-4 4.500V14H12z" fill="#fff" stroke="#888" strokeWidth=".9" />
          </svg>
          <svg className="ml-[13px]" width="20" height="18" viewBox="0 0 20 18">
            <rect x=".7" y="1" width="17" height="15" rx="1" fill="#fcfcfc" stroke="#8b8b8b" /><path d="M1.200 1.500h16v2.500h-16z" fill="#a6a6a6" /><path d="M11 8h4.500V5.500l4 4.500-4 4.500V12H11z" fill="#fff" stroke="#888" strokeWidth=".9" />
          </svg>
          <span className="ml-[14px] font-['Liberation_Serif'] text-[15px] font-bold tracking-normal text-[#333]">A</span>
          <svg width="9" height="10" viewBox="0 0 8 9"><path d="M.7 3h3V.8l3.500 3.700-3.500 3.700V6h-3z" fill="#fff" stroke="#777" strokeWidth=".9" /></svg>
        </div>
        <div className="h-[326px] bg-white">
          <div className="flex h-[25px] items-center pl-px">
            <div className="mb-[4px]"><Folder w={20} h={17} /></div>
            <span className="ml-[10px]">Library</span>
          </div>
          <TreeRow name="Attributes" />
          <TreeRow name="Dynamic" />
          <TreeRow name="Edges" />
          <TreeRow name="Operator" />
          <TreeRow name="Topology" />
          <TreeRow name="Saved queries" leaf />
        </div>
        <div className="h-[3px] bg-[#f1f1f1]" />
        <div className="h-[219px] bg-white">
          <div className="flex h-[24px] items-center pl-[2px]"><Funnel s={17} /><span className="ml-[12px] pt-px">Queries</span></div>
          <div className="flex h-[22.400px] items-center pl-[4px]">
            <div className="w-[23px]"><Chevron dir="r" color="#a8a8a8" w={11} sw={2.2} /></div>
            <Funnel s={11} />
            <b className="ml-[16px]">Degree Range</b>
          </div>
        </div>
        <div className="relative mx-[9px] mt-[16px] mr-[8px] h-[99px] border border-[#c6c6c6]">
          <span className="absolute top-[-11px] left-[4px] bg-[#f1f1f1] px-[2px] leading-[20px] tracking-[-0.28px]">Degree Range Settings</span>
          <div className="mt-[12px] flex items-center px-[2px]">
            <Handle />
            <div className="flex h-[5px] flex-1 flex-col bg-[#9eeaf0]"><div className="h-[2px] bg-[#2aa4ba]" /></div>
            <Handle />
          </div>
          <div className="flex justify-between pr-[11px] pl-[9px] leading-[19px]"><span>1</span><span>5178</span></div>
          <div className="absolute right-[3px] bottom-[3px] h-px w-px bg-[#333]" />
        </div>
        <div className="mt-[9px] mr-[5px] flex justify-end gap-[6px]">
          <Button className="h-[27px] w-[92px] pl-[9px]">
            <div className="h-[18px] w-[18px] bg-[repeating-linear-gradient(135deg,#a9c1e0_0_1.5px,#e6edf6_1.5px_3.5px)]" />
            <span className="ml-[7px]">Select</span>
          </Button>
          <Button className="h-[27px] w-[84px] pl-[12px]">
            <div className="mb-[2px] h-[14px] w-[14px] border border-[#b83c2c] bg-gradient-to-br from-[#f2a898] to-[#d8432c]" />
            <span className="ml-[8px]">Stop</span>
          </Button>
        </div>
      </div>
    </div>
  );
}

export default function App() {
  return (
    <div className="flex h-[1018px] w-[1920px] flex-col overflow-hidden bg-[#f1f1f1] font-['Open_Sans',sans-serif] text-[15px] leading-[20px] tracking-[-0.4px] text-[#111] [&_span]:mb-[2px]">
      <MenuBar />
      <Toolbar />
      <div className="flex pt-[5px] pl-[5px]">
        <div className="mr-[5px] w-[357px] shrink-0">
          <Appearance />
          <LayoutPanel />
        </div>
        <GraphPanel />
        <div className="ml-[6px] w-[314px] shrink-0">
          <ContextPanel />
          <FiltersPanel />
        </div>
      </div>
    </div>
  );
}
